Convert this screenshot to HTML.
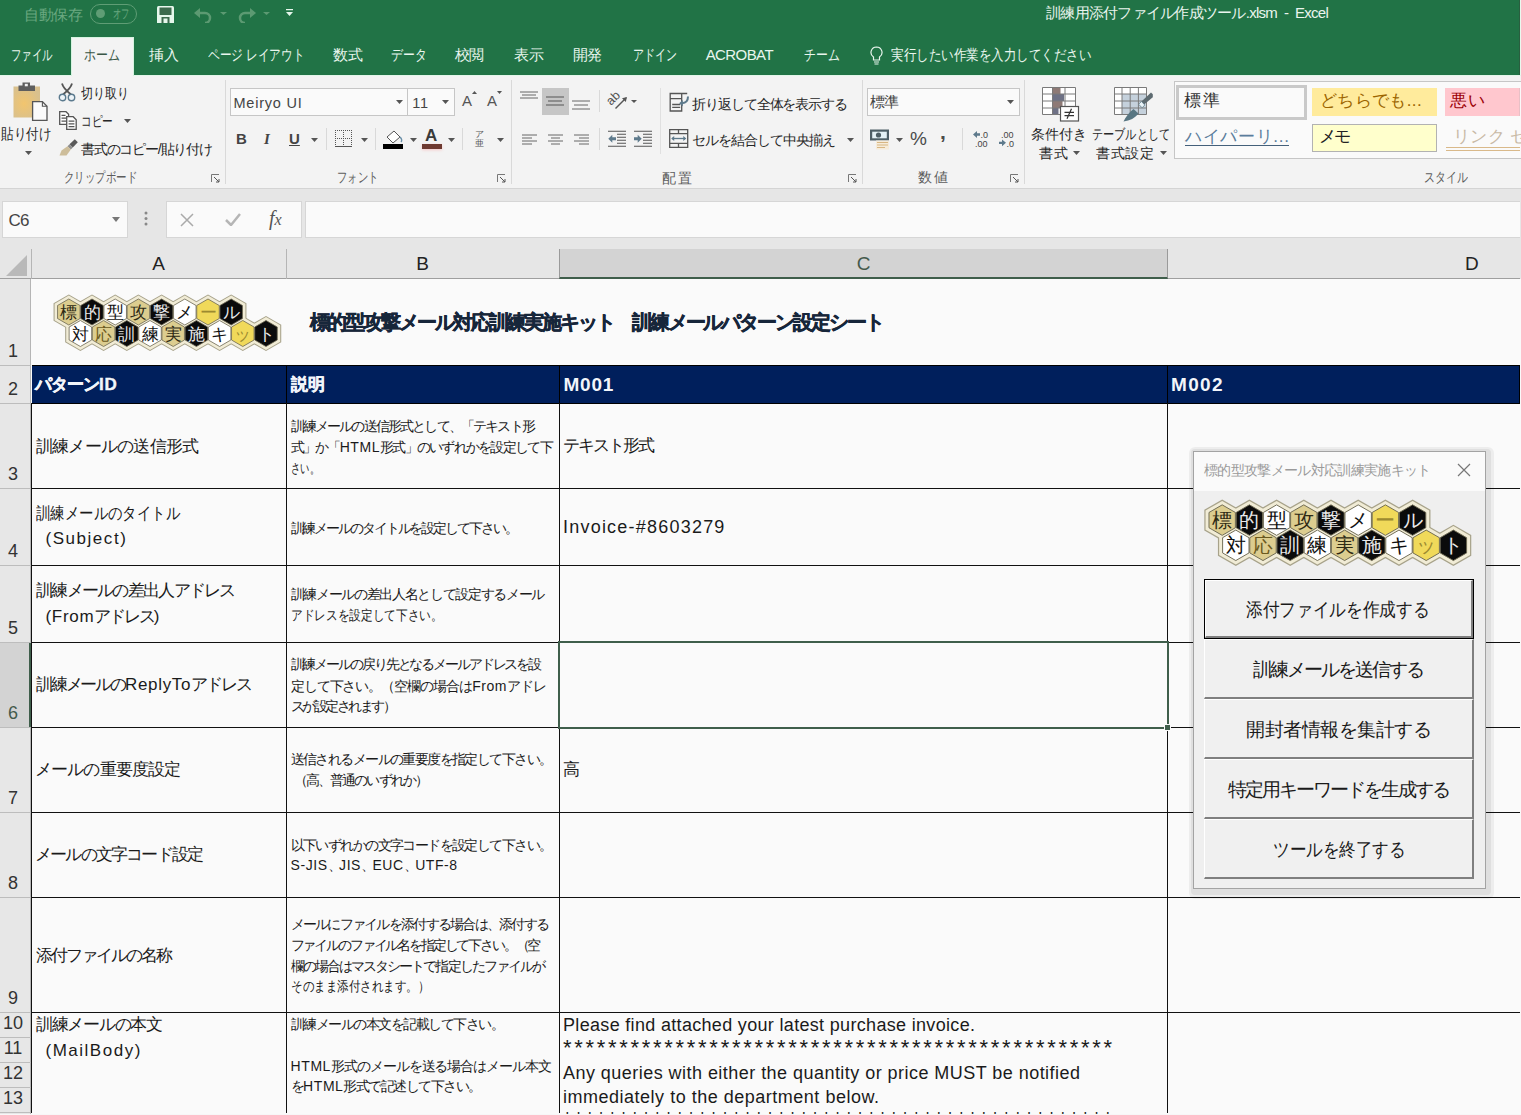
<!DOCTYPE html>
<html><head><meta charset="utf-8">
<style>
*{margin:0;padding:0;box-sizing:border-box}
html,body{width:1521px;height:1115px;overflow:hidden}
body{position:relative;background:#fafafa;font-family:"Liberation Sans",sans-serif;color:#222;font-feature-settings:"palt"}
.a{position:absolute;white-space:nowrap}
/* top */
#green{left:0;top:0;width:1520px;height:75px;background:#217346;border-right:1px solid #2a5e3f}
#edge{left:1520px;top:0;width:1px;height:75px;background:#e9fbf0}
.tab{top:45px;font-size:15px;color:#e9f6ee;line-height:20px}
#ribbon{left:0;top:75px;width:1521px;height:114px;background:#f3f3f3;border-bottom:1px solid #d4d4d4}
#hometab{left:71px;top:37px;width:63px;height:40px;background:#f3f3f3;border:1px solid #d6f3e0;border-bottom:none}
#fband{left:0;top:189px;width:1521px;height:90px;background:#e6e6e6}
.rt{font-size:14px;color:#262626;line-height:18px}
.glabel{font-size:13.5px;color:#5c5c5c;line-height:16px;top:169px}
.vsep{top:80px;width:1px;height:104px;background:#d9d9d9}
/* grid */
.hl{position:absolute;height:1px;background:#111}
.vl{position:absolute;width:1px;background:#111}
.rh{position:absolute;left:0;width:26px;font-size:18px;color:#222;text-align:center;line-height:20px}
.cellA{font-size:16px;color:#111;line-height:25px}
.cellB{font-size:13.3px;color:#111;line-height:21px}
.ti{font-size:20px;font-weight:bold;color:#17263a;line-height:24px;-webkit-text-stroke:0.5px #17263a}
.hd{font-size:17px;font-weight:bold;color:#f2f5fa;line-height:20px;-webkit-text-stroke:0.4px #f2f5fa}
.ca{font-size:17px;color:#1a1a1a;line-height:22px}
.cb{font-size:14px;color:#1a1a1a;line-height:18px}
.cc{font-size:18px;color:#1a1a1a;line-height:22px}
.as{font-size:22px;color:#1a1a1a;line-height:22px}
.cj{font-size:17px;color:#1a1a1a;line-height:22px}
.hm{font-size:19px;font-weight:bold;color:#f2f5fa;line-height:22px}
.bt{font-size:19px;color:#1a1a1a;line-height:22px;text-align:center}
</style></head><body>

<!-- ===== Title bar & tabs ===== -->
<div class="a" id="green"></div>
<div class="a" id="edge"></div>
<div class="a" id="hometab"></div>
<div class="a" id="f_qat" style="left:24.2px;top:5.5px;font-size:15px;color:#6aa880;line-height:18px;letter-spacing:-0.533px">自動保存</div>
<div class="a" style="left:90px;top:4px;width:47px;height:20px;border:1px solid #5f9d75;border-radius:10px"></div>
<div class="a" style="left:96px;top:9px;width:9px;height:9px;border-radius:50%;background:#5f9d75"></div>
<div class="a" id="f_off" style="left:113px;top:6px;font-size:13px;color:#6aa880;line-height:16px;transform:scaleX(0.64);transform-origin:0 0">オフ</div>
<svg class="a" style="left:157px;top:6px" width="17" height="17" viewBox="0 0 17 17"><path d="M0 1.5Q0 0 1.5 0h14Q17 0 17 1.5V17H0z" fill="#e6f7ec"/><rect x="2.5" y="1.5" width="12" height="7.5" fill="#3c6a4d"/><rect x="4.5" y="11" width="8" height="6" fill="#3c6a4d"/><rect x="6.5" y="12.5" width="4" height="4.5" fill="#e6f7ec"/></svg>
<svg class="a" style="left:194px;top:7px" width="34" height="16" viewBox="0 0 34 16"><path d="M3 6h8a5 5 0 0 1 0 10" fill="none" stroke="#5c9a72" stroke-width="2.5"/><path d="M0 6l6-5v10z" fill="#5c9a72"/><path d="M26 5h7l-3.5 3z" fill="#5c9a72"/></svg>
<svg class="a" style="left:236px;top:7px" width="34" height="16" viewBox="0 0 34 16"><path d="M17 6H9a5 5 0 0 0 0 10" fill="none" stroke="#5c9a72" stroke-width="2.5"/><path d="M20 6l-6-5v10z" fill="#5c9a72"/><path d="M27 5h7l-3.5 3z" fill="#5c9a72"/></svg>
<svg class="a" style="left:286px;top:9px" width="7" height="8" viewBox="0 0 7 8"><path d="M0 .5h7" stroke="#e6f7ec" stroke-width="1.5"/><path d="M0 3h7L3.5 7z" fill="#e6f7ec"/></svg>

<div class="a tab" id="f_t0" style="left:11.4px;top:45.3px;transform:scaleX(0.6950);transform-origin:0 50%">ファイル</div>
<div class="a tab" id="f_t1" style="color:#3a5646;left:84.2px;top:45.3px;transform:scaleX(0.7956);transform-origin:0 50%">ホーム</div>
<div class="a tab" id="f_t2" style="left:149px;top:45.3px;letter-spacing:-0.300px">挿入</div>
<div class="a tab" id="f_t3" style="left:207.6px;top:45.3px;transform:scaleX(0.7763);transform-origin:0 50%">ページ レイアウト</div>
<div class="a tab" id="f_t4" style="left:332.5px;top:45.3px;letter-spacing:0.200px">数式</div>
<div class="a tab" id="f_t5" style="left:391px;top:45.3px;transform:scaleX(0.7911);transform-origin:0 50%">データ</div>
<div class="a tab" id="f_t6" style="left:454.8px;top:45.3px;letter-spacing:-1.100px">校閲</div>
<div class="a tab" id="f_t7" style="left:514px;top:45.3px;letter-spacing:-0.400px">表示</div>
<div class="a tab" id="f_t8" style="left:573.4px;top:45.3px;letter-spacing:-1.400px">開発</div>
<div class="a tab" id="f_t9" style="left:632.5px;top:45.3px;transform:scaleX(0.7300);transform-origin:0 50%">アドイン</div>
<div class="a tab" id="f_t10" style="left:705.7px;top:45.3px;letter-spacing:-0.584px">ACROBAT</div>
<div class="a tab" id="f_t11" style="left:804px;top:45.3px;transform:scaleX(0.7911);transform-origin:0 50%">チーム</div>
<svg class="a" style="left:870px;top:46px" width="13" height="19" viewBox="0 0 13 19"><path d="M6.5 1a5.5 5.5 0 0 0-3 10.1V14h6v-2.9A5.5 5.5 0 0 0 6.5 1z" fill="none" stroke="#e9f6ee" stroke-width="1.2"/><path d="M4 16h5M4.5 18h4" stroke="#e9f6ee" stroke-width="1.2"/></svg>
<div class="a tab" id="f_t12" style="left:890.6px;top:45.3px;transform:scaleX(0.8342);transform-origin:0 50%">実行したい作業を入力してください</div>
<div class="a" id="f_title" style="font-size:15px;color:#eaf5ee;line-height:18px;left:1046px;top:4.0px;letter-spacing:-0.734px">訓練用添付ファイル作成ツール.xlsm&nbsp;&nbsp;-&nbsp;&nbsp;Excel</div>

<!-- ===== Ribbon ===== -->
<div class="a" id="ribbon"></div>
<div class="a" style="left:0;top:75px;width:71px;height:1px;background:#e3f6ea"></div><div class="a" style="left:134px;top:75px;width:1387px;height:1px;background:#e3f6ea"></div><div class="a" style="left:71px;top:75px;width:63px;height:1px;background:#f3f3f3;border-left:1px solid #d6f3e0;border-right:1px solid #d6f3e0"></div>
<!-- clipboard group -->
<svg class="a" style="left:10px;top:82px" width="40" height="40" viewBox="0 0 40 40">
 <defs><radialGradient id="pg" cx="0.4" cy="0.55" r="0.6"><stop offset="0" stop-color="#f2c56e"/><stop offset="1" stop-color="#d8c08e"/></radialGradient></defs>
 <rect x="3.5" y="4.5" width="26.5" height="31" fill="url(#pg)"/>
 <rect x="8.5" y="3.5" width="16.5" height="5.5" fill="#5e5e5e"/>
 <rect x="12.5" y="0.5" width="7.5" height="4" fill="#5e5e5e"/>
 <rect x="14.8" y="1.8" width="3" height="2.5" fill="#f3f3f3"/>
 <path d="M22.6 19.6h9.8l4.6 4.6v14.2H22.6z" fill="#fafafa" stroke="#555" stroke-width="1.3"/>
 <path d="M32.4 19.6v4.6H37" fill="none" stroke="#555" stroke-width="1.1"/>
</svg>
<div class="a rt" id="f_r0" style="font-size:15px;left:1.2px;top:125.0px;transform:scaleX(0.8367);transform-origin:0 50%">貼り付け</div>
<svg class="a" style="left:25px;top:151px" width="7" height="4"><path d="M0 0h7L3.5 4z" fill="#555"/></svg>
<svg class="a" style="left:58px;top:82px" width="18" height="20" viewBox="0 0 18 20"><path d="M4 1.5c1 4 4 7 9 11M14 1.5c-1 4-4 7-9 11" stroke="#555" stroke-width="1.8" fill="none"/><circle cx="4.5" cy="15.5" r="3.2" fill="#eef4f8" stroke="#5b7a8e" stroke-width="1.4"/><circle cx="13.5" cy="15.5" r="3.2" fill="#eef4f8" stroke="#5b7a8e" stroke-width="1.4"/></svg>
<div class="a rt" id="f_r1" style="left:81px;top:84.0px;transform:scaleX(0.8571);transform-origin:0 50%">切り取り</div>
<svg class="a" style="left:59px;top:111px" width="18" height="19" viewBox="0 0 18 19"><path d="M.7 .7h6.3l2.6 2.6V13.3H.7z" fill="#fff" stroke="#555" stroke-width="1.3"/><path d="M2.5 4.3h4M2.5 7.2h5M2.5 10.1h5" stroke="#555" stroke-width="1.2"/><path d="M7.7 5.7h6.5l3 3v9.6H7.7z" fill="#fff" stroke="#555" stroke-width="1.3"/><path d="M9.6 10.2h5.8M9.6 12.9h5.8M9.6 15.6h5.8" stroke="#555" stroke-width="1.2"/></svg>
<div class="a rt" id="f_r2" style="left:81px;top:112.0px;transform:scaleX(0.7619);transform-origin:0 50%">コピー</div>
<svg class="a" style="left:124px;top:119px" width="7" height="4"><path d="M0 0h7L3.5 4z" fill="#555"/></svg>
<svg class="a" style="left:59px;top:139px" width="19" height="17" viewBox="0 0 19 17"><path d="M10.5 5.2l5.3-5 3 3-5 5.3z" fill="#595959"/><path d="M8.5 7.2l2-2 3.3 3.3-2 2z" fill="#8d8d8d"/><path d="M0.5 16.5l2-5 6-4.3 3.3 3.3-4.3 6z" fill="#cdbd9a"/></svg>
<div class="a rt" id="f_r3" style="left:81px;top:140.0px;letter-spacing:-1.189px">書式のコピー/貼り付け</div>
<div class="a glabel" id="f_g0" style="left:63.5px;top:169.8px;transform:scaleX(0.7490);transform-origin:0 50%">クリップボード</div>
<svg class="a" style="left:211px;top:174px" width="9" height="9"><path d="M.5 8V.5H8" fill="none" stroke="#777"/><path d="M3 3l5 5M5 8h3V5" fill="none" stroke="#555"/></svg>
<div class="a vsep" style="left:225px"></div>

<!-- font group -->
<div class="a" style="left:230px;top:88px;width:178px;height:28px;background:#fafafa;border:1px solid #c6c6c6"></div>
<div class="a" style="left:407px;top:88px;width:48px;height:28px;background:#fafafa;border:1px solid #c6c6c6"></div>
<div class="a rt" id="f_r4" style="font-size:14.5px;color:#444;left:233.4px;top:93.6px;letter-spacing:0.807px">Meiryo UI</div>
<svg class="a" style="left:396px;top:100px" width="7" height="4"><path d="M0 0h7L3.5 4z" fill="#555"/></svg>
<div class="a rt" id="f_r5" style="font-size:14.5px;color:#444;left:412.3px;top:93.6px;letter-spacing:0.637px">11</div>
<svg class="a" style="left:442px;top:100px" width="7" height="4"><path d="M0 0h7L3.5 4z" fill="#555"/></svg>
<div class="a" style="left:462px;top:92px;font-size:15px;color:#555;line-height:18px">A</div>
<svg class="a" style="left:472px;top:91px" width="5" height="3"><path d="M0 3h5L2.5 0z" fill="#555"/></svg>
<div class="a" style="left:487px;top:92px;font-size:15px;color:#555;line-height:18px">A</div>
<svg class="a" style="left:497px;top:91px" width="5" height="3"><path d="M0 0h5L2.5 3z" fill="#555"/></svg>
<div class="a" style="left:236px;top:130px;font-size:15px;font-weight:bold;color:#444;line-height:18px">B</div>
<div class="a" style="left:264px;top:130px;font-size:15px;font-weight:bold;font-style:italic;color:#444;line-height:18px;font-family:'Liberation Serif',serif">I</div>
<div class="a" style="left:289px;top:130px;font-size:15px;font-weight:bold;color:#444;line-height:18px;text-decoration:underline">U</div>
<svg class="a" style="left:311px;top:138px" width="7" height="4"><path d="M0 0h7L3.5 4z" fill="#555"/></svg>
<div class="a" style="left:326px;top:128px;width:1px;height:22px;background:#d9d9d9"></div>
<svg class="a" style="left:335px;top:130px" width="18" height="18" viewBox="0 0 18 18" shape-rendering="crispEdges"><path d="M0.5 0v16M8.5 0v16M16.5 0v16M0 0.5h17M0 8.5h17" stroke="#555" stroke-width="1" stroke-dasharray="1 1" fill="none"/><path d="M0 16.5h17" stroke="#555" stroke-width="1"/></svg>
<svg class="a" style="left:361px;top:138px" width="7" height="4"><path d="M0 0h7L3.5 4z" fill="#555"/></svg>
<div class="a" style="left:375px;top:128px;width:1px;height:22px;background:#d9d9d9"></div>
<svg class="a" style="left:383px;top:128px" width="22" height="22" viewBox="0 0 22 22"><path d="M4 9l7-6 6 6-7 6z" fill="#fff" stroke="#555"/><path d="M17 9c2 2 2 4 1 5" stroke="#6a8fa8" stroke-width="1.5" fill="none"/><rect x="0" y="16" width="20" height="5" fill="#000"/></svg>
<svg class="a" style="left:410px;top:138px" width="7" height="4"><path d="M0 0h7L3.5 4z" fill="#555"/></svg>
<div class="a" style="left:425px;top:126px;font-size:17px;font-weight:bold;color:#3a3a3a;line-height:20px">A</div>
<div class="a" style="left:422px;top:144px;width:20px;height:5px;background:#6e3a31;box-shadow:0 1px 3px rgba(255,120,120,.35)"></div>
<svg class="a" style="left:448px;top:138px" width="7" height="4"><path d="M0 0h7L3.5 4z" fill="#555"/></svg>
<div class="a" style="left:462px;top:128px;width:1px;height:22px;background:#d9d9d9"></div>
<div class="a" style="left:475px;top:130px;font-size:9px;color:#555;line-height:9px">ア<br>亜</div>
<svg class="a" style="left:497px;top:138px" width="7" height="4"><path d="M0 0h7L3.5 4z" fill="#555"/></svg>
<div class="a glabel" id="f_g1" style="left:337.4px;top:169.6px;transform:scaleX(0.7393);transform-origin:0 50%">フォント</div>
<svg class="a" style="left:497px;top:174px" width="9" height="9"><path d="M.5 8V.5H8" fill="none" stroke="#777"/><path d="M3 3l5 5M5 8h3V5" fill="none" stroke="#555"/></svg>
<div class="a vsep" style="left:511px"></div>

<!-- alignment group -->
<svg class="a" style="left:519px;top:91px" width="20" height="8"><path d="M1 1h18M3 4h14M1 7h18" stroke="#666"/></svg>
<div class="a" style="left:542px;top:88px;width:27px;height:27px;background:#c6c6c6"></div>
<svg class="a" style="left:545px;top:96px" width="20" height="11"><path d="M1 1h18M3 5h14M1 9h18" stroke="#555"/></svg>
<svg class="a" style="left:571px;top:100px" width="20" height="11"><path d="M1 1h18M3 5h14M1 9h18" stroke="#666"/></svg>
<div class="a" style="left:599px;top:90px;width:1px;height:22px;background:#d9d9d9"></div>
<svg class="a" style="left:606px;top:90px" width="34" height="22" viewBox="0 0 34 22"><text x="1.5" y="14.5" font-size="12.5" fill="#555" transform="rotate(-45 5 11)" font-family="Liberation Sans">ab</text><path d="M9.5 18.5l10.5-10.5" stroke="#555" stroke-width="1.4"/><path d="M21 7l-5 1.2 3.8 3.8z" fill="#555"/><path d="M25 10h6l-3 3z" fill="#555"/></svg>
<div class="a" style="left:660px;top:88px;width:1px;height:66px;background:#e0e0e0"></div>
<svg class="a" style="left:669px;top:92px" width="21" height="20" viewBox="0 0 21 20"><path d="M1.2 1.5h11.5v17.5H1.2zM1.2 6.6h11.5M12.7 1.5h5.5M3.2 12.5h8M3.2 15.4h8" fill="none" stroke="#555" stroke-width="1.3"/><path d="M19 4.5c0 4-2 6.5-6 6.8" fill="none" stroke="#5e7a8c" stroke-width="2"/><path d="M10.2 11.3l3.6-3.2v6.4z" fill="#5e7a8c"/></svg>
<div class="a rt" id="f_r6" style="left:692px;top:95.0px;letter-spacing:-1.073px">折り返して全体を表示する</div>
<svg class="a" style="left:521px;top:134px" width="17" height="12"><path d="M1 1h15M1 4h10M1 7h15M1 10h10" stroke="#666"/></svg>
<svg class="a" style="left:547px;top:134px" width="17" height="12"><path d="M1 1h15M4 4h9M1 7h15M4 10h9" stroke="#666"/></svg>
<svg class="a" style="left:573px;top:134px" width="17" height="12"><path d="M1 1h15M6 4h10M1 7h15M6 10h10" stroke="#666"/></svg>
<div class="a" style="left:599px;top:128px;width:1px;height:22px;background:#d9d9d9"></div>
<svg class="a" style="left:608px;top:130px" width="19" height="18" viewBox="0 0 19 18"><path d="M0 1.3h18M9 4.3h9M9 7.3h9M9 10.3h9M9 13.3h9M0 16.3h18" stroke="#555" stroke-width="1.1"/><path d="M0.3 8.8l4-4v2.5h3.7v3h-3.7v2.5z" fill="#5e7a8c"/></svg>
<svg class="a" style="left:634px;top:130px" width="19" height="18" viewBox="0 0 19 18"><path d="M0 1.3h18M9 4.3h9M9 7.3h9M9 10.3h9M9 13.3h9M0 16.3h18" stroke="#555" stroke-width="1.1"/><path d="M7.7 8.8l-4-4v2.5H0v3h3.7v2.5z" fill="#5e7a8c"/></svg>
<svg class="a" style="left:669px;top:129px" width="20" height="19" viewBox="0 0 20 19"><path d="M.7 .7h18v17.6H.7zM.7 4.6h18M.7 14.4h18M9.5 .7v3.9M9.5 14.4v3.9" fill="none" stroke="#555" stroke-width="1.3"/><path d="M3.5 9.5h12.5" stroke="#5e7a8c" stroke-width="1.3"/><path d="M2.2 9.5l3-2.6v5.2zM17.3 9.5l-3-2.6v5.2z" fill="#5e7a8c"/></svg>
<div class="a rt" id="f_r7" style="left:692px;top:131.0px;letter-spacing:-0.960px">セルを結合して中央揃え</div>
<svg class="a" style="left:847px;top:138px" width="7" height="4"><path d="M0 0h7L3.5 4z" fill="#555"/></svg>
<div class="a glabel" id="f_g2" style="left:662.4px;top:170.6px;letter-spacing:1.600px">配置</div>
<svg class="a" style="left:848px;top:174px" width="9" height="9"><path d="M.5 8V.5H8" fill="none" stroke="#777"/><path d="M3 3l5 5M5 8h3V5" fill="none" stroke="#555"/></svg>
<div class="a vsep" style="left:862px"></div>

<!-- number group -->
<div class="a" style="left:867px;top:88px;width:153px;height:28px;background:#fafafa;border:1px solid #c6c6c6"></div>
<div class="a rt" id="f_r8" style="font-size:14.5px;color:#444;left:870.2px;top:93.3px;letter-spacing:-0.700px">標準</div>
<svg class="a" style="left:1007px;top:100px" width="7" height="4"><path d="M0 0h7L3.5 4z" fill="#555"/></svg>
<svg class="a" style="left:870px;top:129px" width="20" height="21" viewBox="0 0 20 21"><rect x="0" y="0.5" width="19" height="11" fill="#4d5f66"/><rect x="2.2" y="2.7" width="14.6" height="6.6" fill="#e3f1f5"/><circle cx="8.5" cy="6" r="2.6" fill="#4d5f66"/><rect x="6" y="11.5" width="13" height="9" fill="#f6ecda"/><path d="M7 13.5h11M7 16h11M7 18.5h8" stroke="#d8b784" stroke-width="1.1"/></svg>
<svg class="a" style="left:896px;top:138px" width="7" height="4"><path d="M0 0h7L3.5 4z" fill="#555"/></svg>
<div class="a" style="left:910px;top:129px;font-size:19px;color:#4a4a4a;line-height:20px">%</div>
<div class="a" style="left:940px;top:122px;font-size:21px;font-weight:bold;color:#4a4a4a;line-height:20px">,</div>
<div class="a" style="left:962px;top:128px;width:1px;height:22px;background:#d9d9d9"></div>
<svg class="a" style="left:972px;top:130px" width="18" height="18" viewBox="0 0 18 18"><path d="M1 4.5l4-3.5v2.3h3v2.4H5V8z" fill="#5e7a8c"/><text x="8.5" y="7.5" font-size="9" fill="#444" font-family="Liberation Sans">.0</text><text x="3" y="16.5" font-size="9" fill="#444" font-family="Liberation Sans">.00</text></svg>
<svg class="a" style="left:998px;top:130px" width="18" height="18" viewBox="0 0 18 18"><text x="3" y="7.5" font-size="9" fill="#444" font-family="Liberation Sans">.00</text><path d="M8 12.8l-4-3.3v2.2H1v2.3h3v2.2z" fill="#5e7a8c"/><text x="8.5" y="16.5" font-size="9" fill="#444" font-family="Liberation Sans">.0</text></svg>
<div class="a glabel" id="f_g3" style="left:918px;top:169.8px;letter-spacing:2.300px">数値</div>
<svg class="a" style="left:1010px;top:174px" width="9" height="9"><path d="M.5 8V.5H8" fill="none" stroke="#777"/><path d="M3 3l5 5M5 8h3V5" fill="none" stroke="#555"/></svg>
<div class="a vsep" style="left:1024px"></div>

<!-- styles -->
<svg class="a" style="left:1042px;top:87px" width="38" height="35" viewBox="0 0 38 35"><rect x="0.5" y="0.5" width="33" height="27" fill="#fff"/><rect x="10.5" y="0.5" width="8" height="6.5" fill="#8e7a76"/><rect x="10.5" y="7" width="11.5" height="7" fill="#6e7185"/><rect x="10.5" y="14" width="10" height="7" fill="#8e7a76"/><rect x="10.5" y="21" width="6" height="6.5" fill="#6e7185"/><path d="M.5 .5h33v27H.5zM.5 7h33M.5 14h33M.5 21h33M10.5 .5v27M23 .5v27" fill="none" stroke="#7a7a7a" stroke-width="1"/><rect x="18.5" y="19.5" width="18" height="14.5" fill="#fff" stroke="#555" stroke-width="1.2"/><path d="M22.5 25.3h9.5M22.5 28.7h9.5M29.5 21.8l-4.5 10" stroke="#333" stroke-width="1.2" fill="none"/></svg>
<div class="a rt" id="f_r9" style="left:1031px;top:125.0px;letter-spacing:-0.100px">条件付き</div>
<div class="a rt" id="f_r10" style="left:1039px;top:143.9px;letter-spacing:1.000px">書式</div><svg class="a" style="left:1073px;top:151px" width="7" height="4"><path d="M0 0h7L3.5 4z" fill="#555"/></svg>
<svg class="a" style="left:1114px;top:87px" width="40" height="36" viewBox="0 0 40 36"><rect x="0.5" y="0.5" width="32" height="27" fill="#fff"/><rect x="8" y="7" width="24.5" height="20.5" fill="#c5d1dc"/><path d="M.5 .5h32v27H.5zM.5 7h32M.5 14h32M.5 21h32M8 .5v27M16.2 .5v27M24.4 .5v27" fill="none" stroke="#7a7a7a" stroke-width="1"/><path d="M27.5 14.5l9.5-9 1.8 1.8v3L29.5 18z" fill="#5d6a70"/><path d="M24.6 17.2l2.9-2.7 3.3 3.5-2.7 2.8z" fill="#eaf3f7" stroke="#5d7a88" stroke-width="0.8"/><path d="M9.5 34.5c2-4.5 5.5-9 10-12.5l5 4.6C21 31 16 34 9.5 34.5z" fill="#587682"/></svg>
<div class="a rt" id="f_r11" style="left:1091.5px;top:125.0px;transform:scaleX(0.7969);transform-origin:0 50%">テーブルとして</div>
<div class="a rt" id="f_r12" style="left:1096.3px;top:144.0px;letter-spacing:0.567px">書式設定</div><svg class="a" style="left:1160px;top:151px" width="7" height="4"><path d="M0 0h7L3.5 4z" fill="#555"/></svg>
<div class="a" style="left:1174px;top:81px;width:360px;height:78px;background:#fafafa;border:1px solid #c6c6c6"></div>
<div class="a" style="left:1176px;top:85px;width:131px;height:35px;background:#fafafa;border:3px solid #c9c9c9"></div>
<div class="a" id="f_s0" style="font-size:17px;color:#333;line-height:22px;left:1184.3px;top:90.0px;letter-spacing:1.300px">標準</div>
<div class="a" style="left:1312px;top:88px;width:125px;height:28px;background:#ffeb9c"></div>
<div class="a" id="f_s1" style="font-size:17px;color:#9c6500;line-height:22px;left:1320px;top:90.0px;letter-spacing:0.347px">どちらでも...</div>
<div class="a" style="left:1445px;top:88px;width:75px;height:28px;background:#ffc7ce;border-right:1px solid #e8c0c6"></div>
<div class="a" id="f_s2" style="font-size:17px;color:#9c0006;line-height:22px;left:1450.4px;top:90.0px;letter-spacing:0.600px">悪い</div>
<div class="a" id="f_s3" style="font-size:17px;color:#5b7d9c;line-height:22px;left:1185px;top:125.9px;letter-spacing:0.675px">ハイパーリ...</div><div class="a" style="left:1185px;top:145px;width:104px;height:1px;background:#44607a"></div>
<div class="a" style="left:1312px;top:124px;width:125px;height:28px;background:#ffffcc;border:1px solid #b2b2b2"></div>
<div class="a" id="f_s4" style="font-size:17px;color:#222;line-height:22px;left:1318.9px;top:126.0px;letter-spacing:-1.900px">メモ</div>
<div class="a" id="f_s5" style="font-size:17px;color:#c8b9a5;line-height:22px;left:1452.7px;top:126.0px;letter-spacing:0.513px">リンク セル</div><div class="a" style="left:1446px;top:147px;width:74px;height:4px;border-top:1px solid #d9b98a;border-bottom:1px solid #d9b98a"></div>
<div class="a glabel" id="f_g4" style="left:1423.9px;top:169.7px;transform:scaleX(0.7821);transform-origin:0 50%">スタイル</div>

<!-- ===== Formula band ===== -->
<div class="a" id="fband"></div>
<div class="a" style="left:2px;top:201px;width:126px;height:37px;background:#fafafa;border:1px solid #d6d6d6"></div>
<div class="a" id="f_c6" style="font-size:17px;color:#444;line-height:20px;left:8.4px;top:210.6px;letter-spacing:-0.634px">C6</div>
<svg class="a" style="left:112px;top:217px" width="8" height="5"><path d="M0 0h8L4 5z" fill="#777"/></svg>
<svg class="a" style="left:144px;top:211px" width="4" height="15"><circle cx="2" cy="2" r="1.5" fill="#888"/><circle cx="2" cy="7.5" r="1.5" fill="#888"/><circle cx="2" cy="13" r="1.5" fill="#888"/></svg>
<div class="a" style="left:166px;top:201px;width:136px;height:37px;background:#fafafa;border:1px solid #d6d6d6"></div>
<svg class="a" style="left:180px;top:213px" width="14" height="14"><path d="M1 1l12 12M13 1L1 13" stroke="#aaa" stroke-width="1.5"/></svg>
<svg class="a" style="left:225px;top:212px" width="16" height="14"><path d="M1 8l5 5L15 2" stroke="#b5b5b5" stroke-width="2.5" fill="none"/></svg>
<div class="a" style="left:269px;top:207px;font-size:20px;font-style:italic;color:#555;line-height:22px;font-family:'Liberation Serif',serif">f<span style="font-size:16px">x</span></div>
<div class="a" style="left:305px;top:201px;width:1215px;height:37px;background:#fafafa;border:1px solid #d6d6d6;border-right:none"></div>
<!-- column headers -->
<div class="a" style="left:0;top:278px;width:1520px;height:1px;background:#9f9f9f"></div>
<svg class="a" style="left:6px;top:255px" width="22" height="21"><path d="M21 0v21H0z" fill="#b9b9b9"/></svg>
<div class="a" style="left:31px;top:249px;width:1px;height:30px;background:#b5b5b5"></div>
<div class="a" style="left:286px;top:249px;width:1px;height:30px;background:#b5b5b5"></div>
<div class="a" style="left:559px;top:249px;width:609px;height:30px;background:#d3d3d3;border-left:1px solid #9a9a9a;border-right:1px solid #9a9a9a;border-bottom:2px solid #3f5e4b"></div>
<div class="a" style="left:0;top:253px;width:317px;font-size:19px;color:#222;line-height:22px;text-align:center">A</div>
<div class="a" style="left:286px;top:253px;width:273px;font-size:19px;color:#222;line-height:22px;text-align:center">B</div>
<div class="a" style="left:559px;top:253px;width:609px;font-size:19px;color:#445a4c;line-height:22px;text-align:center">C</div>
<div class="a" style="left:1465px;top:253px;font-size:19px;color:#222;line-height:22px">D</div>

<!-- ===== Grid ===== -->
<div class="a" style="left:0;top:279px;width:31px;height:836px;background:#e7e7e7;border-right:1px solid #b5b5b5"></div>
<div class="a" style="left:0;top:642px;width:31px;height:86px;background:#d3d3d3;border-right:2px solid #3f5e4b"></div>
<div class="a" style="left:0;top:365px;width:31px;height:1px;background:#bdbdbd"></div>
<div class="a rh" style="top:341px;color:#333">1</div>
<div class="a" style="left:0;top:403px;width:31px;height:1px;background:#bdbdbd"></div>
<div class="a rh" style="top:379px;color:#333">2</div>
<div class="a" style="left:0;top:488px;width:31px;height:1px;background:#bdbdbd"></div>
<div class="a rh" style="top:464px;color:#333">3</div>
<div class="a" style="left:0;top:565px;width:31px;height:1px;background:#bdbdbd"></div>
<div class="a rh" style="top:541px;color:#333">4</div>
<div class="a" style="left:0;top:642px;width:31px;height:1px;background:#bdbdbd"></div>
<div class="a rh" style="top:618px;color:#333">5</div>
<div class="a" style="left:0;top:727px;width:31px;height:1px;background:#bdbdbd"></div>
<div class="a rh" style="top:703px;color:#445a4c">6</div>
<div class="a" style="left:0;top:812px;width:31px;height:1px;background:#bdbdbd"></div>
<div class="a rh" style="top:788px;color:#333">7</div>
<div class="a" style="left:0;top:897px;width:31px;height:1px;background:#bdbdbd"></div>
<div class="a rh" style="top:873px;color:#333">8</div>
<div class="a" style="left:0;top:1012px;width:31px;height:1px;background:#bdbdbd"></div>
<div class="a rh" style="top:988px;color:#333">9</div>
<div class="a" style="left:0;top:1037px;width:31px;height:1px;background:#bdbdbd"></div>
<div class="a rh" style="top:1013px;color:#333">10</div>
<div class="a" style="left:0;top:1062px;width:31px;height:1px;background:#bdbdbd"></div>
<div class="a rh" style="top:1038px;color:#333">11</div>
<div class="a" style="left:0;top:1087px;width:31px;height:1px;background:#bdbdbd"></div>
<div class="a rh" style="top:1063px;color:#333">12</div>
<div class="a" style="left:0;top:1112px;width:31px;height:1px;background:#bdbdbd"></div>
<div class="a rh" style="top:1088px;color:#333">13</div>
<div class="a" style="left:0;top:1137px;width:31px;height:1px;background:#bdbdbd"></div>
<div class="a rh" style="top:1113px;color:#333">14</div>
<div class="a" style="left:32px;top:365px;width:1488px;height:39px;background:#001f5c;border-top:1px solid #000;border-bottom:1px solid #000"></div>
<div class="a" style="left:286px;top:365px;width:1px;height:39px;background:#000"></div>
<div class="a" style="left:559px;top:365px;width:1px;height:39px;background:#000"></div>
<div class="a" style="left:1167px;top:365px;width:1px;height:39px;background:#000"></div>
<div class="a" style="left:1519px;top:365px;width:1px;height:39px;background:#000"></div>
<div class="hl" style="left:32px;top:488px;width:1488px"></div>
<div class="hl" style="left:32px;top:565px;width:1488px"></div>
<div class="hl" style="left:32px;top:642px;width:1488px"></div>
<div class="hl" style="left:32px;top:727px;width:1488px"></div>
<div class="hl" style="left:32px;top:812px;width:1488px"></div>
<div class="hl" style="left:32px;top:897px;width:1488px"></div>
<div class="hl" style="left:32px;top:1012px;width:1488px"></div>
<div class="vl" style="left:31px;top:403px;height:710px"></div>
<div class="vl" style="left:286px;top:403px;height:710px"></div>
<div class="vl" style="left:559px;top:403px;height:710px"></div>
<div class="vl" style="left:1167px;top:403px;height:710px"></div>
<div class="a" style="left:558px;top:641px;width:611px;height:88px;border:2px solid #3f5e4b"></div>
<div class="a" style="left:1164px;top:724px;width:7px;height:7px;background:#3f5e4b;border:1px solid #fafafa"></div>

<!-- ===== Logos ===== -->
<svg width="0" height="0" style="position:absolute"><symbol id="logo" viewBox="0 0 232 58">
<g fill="#a7a28a"><polygon points="16.80,0.40 32.04,9.20 32.04,26.80 16.80,35.60 1.56,26.80 1.56,9.20"/><polygon points="40.00,0.40 55.24,9.20 55.24,26.80 40.00,35.60 24.76,26.80 24.76,9.20"/><polygon points="63.20,0.40 78.44,9.20 78.44,26.80 63.20,35.60 47.96,26.80 47.96,9.20"/><polygon points="86.40,0.40 101.64,9.20 101.64,26.80 86.40,35.60 71.16,26.80 71.16,9.20"/><polygon points="109.60,0.40 124.84,9.20 124.84,26.80 109.60,35.60 94.36,26.80 94.36,9.20"/><polygon points="132.80,0.40 148.04,9.20 148.04,26.80 132.80,35.60 117.56,26.80 117.56,9.20"/><polygon points="156.00,0.40 171.24,9.20 171.24,26.80 156.00,35.60 140.76,26.80 140.76,9.20"/><polygon points="179.20,0.40 194.44,9.20 194.44,26.80 179.20,35.60 163.96,26.80 163.96,9.20"/><polygon points="28.40,21.90 43.64,30.70 43.64,48.30 28.40,57.10 13.16,48.30 13.16,30.70"/><polygon points="51.60,21.90 66.84,30.70 66.84,48.30 51.60,57.10 36.36,48.30 36.36,30.70"/><polygon points="74.80,21.90 90.04,30.70 90.04,48.30 74.80,57.10 59.56,48.30 59.56,30.70"/><polygon points="98.00,21.90 113.24,30.70 113.24,48.30 98.00,57.10 82.76,48.30 82.76,30.70"/><polygon points="121.20,21.90 136.44,30.70 136.44,48.30 121.20,57.10 105.96,48.30 105.96,30.70"/><polygon points="144.40,21.90 159.64,30.70 159.64,48.30 144.40,57.10 129.16,48.30 129.16,30.70"/><polygon points="167.60,21.90 182.84,30.70 182.84,48.30 167.60,57.10 152.36,48.30 152.36,30.70"/><polygon points="190.80,21.90 206.04,30.70 206.04,48.30 190.80,57.10 175.56,48.30 175.56,30.70"/><polygon points="214.00,21.90 229.24,30.70 229.24,48.30 214.00,57.10 198.76,48.30 198.76,30.70"/></g>
<g fill="#f1ecd6"><polygon points="16.80,1.60 31.00,9.80 31.00,26.20 16.80,34.40 2.60,26.20 2.60,9.80"/><polygon points="40.00,1.60 54.20,9.80 54.20,26.20 40.00,34.40 25.80,26.20 25.80,9.80"/><polygon points="63.20,1.60 77.40,9.80 77.40,26.20 63.20,34.40 49.00,26.20 49.00,9.80"/><polygon points="86.40,1.60 100.60,9.80 100.60,26.20 86.40,34.40 72.20,26.20 72.20,9.80"/><polygon points="109.60,1.60 123.80,9.80 123.80,26.20 109.60,34.40 95.40,26.20 95.40,9.80"/><polygon points="132.80,1.60 147.00,9.80 147.00,26.20 132.80,34.40 118.60,26.20 118.60,9.80"/><polygon points="156.00,1.60 170.20,9.80 170.20,26.20 156.00,34.40 141.80,26.20 141.80,9.80"/><polygon points="179.20,1.60 193.40,9.80 193.40,26.20 179.20,34.40 165.00,26.20 165.00,9.80"/><polygon points="28.40,23.10 42.60,31.30 42.60,47.70 28.40,55.90 14.20,47.70 14.20,31.30"/><polygon points="51.60,23.10 65.80,31.30 65.80,47.70 51.60,55.90 37.40,47.70 37.40,31.30"/><polygon points="74.80,23.10 89.00,31.30 89.00,47.70 74.80,55.90 60.60,47.70 60.60,31.30"/><polygon points="98.00,23.10 112.20,31.30 112.20,47.70 98.00,55.90 83.80,47.70 83.80,31.30"/><polygon points="121.20,23.10 135.40,31.30 135.40,47.70 121.20,55.90 107.00,47.70 107.00,31.30"/><polygon points="144.40,23.10 158.60,31.30 158.60,47.70 144.40,55.90 130.20,47.70 130.20,31.30"/><polygon points="167.60,23.10 181.80,31.30 181.80,47.70 167.60,55.90 153.40,47.70 153.40,31.30"/><polygon points="190.80,23.10 205.00,31.30 205.00,47.70 190.80,55.90 176.60,47.70 176.60,31.30"/><polygon points="214.00,23.10 228.20,31.30 228.20,47.70 214.00,55.90 199.80,47.70 199.80,31.30"/></g>
<g stroke="#6b6650" stroke-width="0.8"><polygon points="16.80,5.00 28.06,11.50 28.06,24.50 16.80,31.00 5.54,24.50 5.54,11.50" fill="#dccd8f"/><polygon points="40.00,5.00 51.26,11.50 51.26,24.50 40.00,31.00 28.74,24.50 28.74,11.50" fill="#0b0b0b"/><polygon points="63.20,5.00 74.46,11.50 74.46,24.50 63.20,31.00 51.94,24.50 51.94,11.50" fill="#ffffff"/><polygon points="86.40,5.00 97.66,11.50 97.66,24.50 86.40,31.00 75.14,24.50 75.14,11.50" fill="#dccd8f"/><polygon points="109.60,5.00 120.86,11.50 120.86,24.50 109.60,31.00 98.34,24.50 98.34,11.50" fill="#0b0b0b"/><polygon points="132.80,5.00 144.06,11.50 144.06,24.50 132.80,31.00 121.54,24.50 121.54,11.50" fill="#ffffff"/><polygon points="156.00,5.00 167.26,11.50 167.26,24.50 156.00,31.00 144.74,24.50 144.74,11.50" fill="#f0d95a"/><polygon points="179.20,5.00 190.46,11.50 190.46,24.50 179.20,31.00 167.94,24.50 167.94,11.50" fill="#0b0b0b"/><polygon points="28.40,26.50 39.66,33.00 39.66,46.00 28.40,52.50 17.14,46.00 17.14,33.00" fill="#ffffff"/><polygon points="51.60,26.50 62.86,33.00 62.86,46.00 51.60,52.50 40.34,46.00 40.34,33.00" fill="#dccd8f"/><polygon points="74.80,26.50 86.06,33.00 86.06,46.00 74.80,52.50 63.54,46.00 63.54,33.00" fill="#0b0b0b"/><polygon points="98.00,26.50 109.26,33.00 109.26,46.00 98.00,52.50 86.74,46.00 86.74,33.00" fill="#ffffff"/><polygon points="121.20,26.50 132.46,33.00 132.46,46.00 121.20,52.50 109.94,46.00 109.94,33.00" fill="#dccd8f"/><polygon points="144.40,26.50 155.66,33.00 155.66,46.00 144.40,52.50 133.14,46.00 133.14,33.00" fill="#0b0b0b"/><polygon points="167.60,26.50 178.86,33.00 178.86,46.00 167.60,52.50 156.34,46.00 156.34,33.00" fill="#ffffff"/><polygon points="190.80,26.50 202.06,33.00 202.06,46.00 190.80,52.50 179.54,46.00 179.54,33.00" fill="#f0d95a"/><polygon points="214.00,26.50 225.26,33.00 225.26,46.00 214.00,52.50 202.74,46.00 202.74,33.00" fill="#0b0b0b"/></g>
<g font-size="17" text-anchor="middle" font-family="Liberation Sans"><text x="16.8" y="24.0" fill="#2e2a14">標</text><text x="40.0" y="24.0" fill="#e9e9e9">的</text><text x="63.2" y="24.0" fill="#111">型</text><text x="86.4" y="24.0" fill="#2e2a14">攻</text><text x="109.6" y="24.0" fill="#e9e9e9">撃</text><text x="132.8" y="24.0" fill="#111">メ</text><text x="156.0" y="24.0" fill="#9c8a30">ー</text><text x="179.2" y="24.0" fill="#e9e9e9">ル</text><text x="28.4" y="45.5" fill="#111">対</text><text x="51.6" y="45.5" fill="#6b5a1e">応</text><text x="74.8" y="45.5" fill="#e9e9e9">訓</text><text x="98.0" y="45.5" fill="#111">練</text><text x="121.2" y="45.5" fill="#2e2a14">実</text><text x="144.4" y="45.5" fill="#e9e9e9">施</text><text x="167.6" y="45.5" fill="#111">キ</text><text x="190.8" y="45.5" fill="#9c8a30">ッ</text><text x="214.0" y="45.5" fill="#e9e9e9">ト</text></g>
</symbol></svg>
<svg class="a" style="left:52px;top:294px" width="232" height="58"><use href="#logo"/></svg>
<!-- ===== Dialog ===== -->
<div class="a" style="left:1189px;top:447px;width:305px;height:452px;background:rgba(0,0,0,0.05);border-radius:6px"></div>
<div class="a" style="left:1191px;top:449px;width:300px;height:446px;background:rgba(0,0,0,0.06);border-radius:4px"></div>
<div class="a" style="left:1193px;top:451px;width:293px;height:438px;background:#efefef;border:1px solid #a3a3a3"></div>
<div class="a" style="left:1194px;top:452px;width:291px;height:39px;background:#fafafa"></div>
<div class="a" id="f_dt" style="font-size:13.5px;color:#9a9a9a;line-height:18px;left:1204px;top:461.8px;letter-spacing:-0.675px">標的型攻撃メール対応訓練実施キット</div>
<svg class="a" style="left:1457px;top:463px" width="14" height="14"><path d="M1 1l12 12M13 1L1 13" stroke="#777" stroke-width="1.2"/></svg>
<svg class="a" style="left:1202px;top:499px" width="273" height="68" viewBox="0 0 232 58"><use href="#logo"/></svg>
<div class="a" style="left:1204px;top:579px;width:270px;height:60px;border:1px solid #000;background:#f0f0f0"><div style="position:absolute;left:0;top:0;right:0;bottom:0;border-top:1px solid #fff;border-left:1px solid #fff;border-right:2px solid #7f7f7f;border-bottom:2px solid #7f7f7f"></div></div>
<div class="a bt" id="f_b0" style="left:1246.4px;top:599.4px;transform:scaleX(0.8775);transform-origin:0 50%">添付ファイルを作成する</div>
<div class="a" style="left:1204px;top:639px;width:270px;height:60px;background:#f0f0f0;border-top:1px solid #fff;border-left:1px solid #fff;border-right:2px solid #7f7f7f;border-bottom:2px solid #7f7f7f"></div>
<div class="a bt" id="f_b1" style="left:1252.7px;top:659.3px;letter-spacing:-2.000px">訓練メールを送信する</div>
<div class="a" style="left:1204px;top:699px;width:270px;height:60px;background:#f0f0f0;border-top:1px solid #fff;border-left:1px solid #fff;border-right:2px solid #7f7f7f;border-bottom:2px solid #7f7f7f"></div>
<div class="a bt" id="f_b2" style="left:1246.4px;top:719.2px;letter-spacing:-0.500px">開封者情報を集計する</div>
<div class="a" style="left:1204px;top:759px;width:270px;height:60px;background:#f0f0f0;border-top:1px solid #fff;border-left:1px solid #fff;border-right:2px solid #7f7f7f;border-bottom:2px solid #7f7f7f"></div>
<div class="a bt" id="f_b3" style="left:1227.5px;top:779.0px;letter-spacing:-1.967px">特定用キーワードを生成する</div>
<div class="a" style="left:1204px;top:819px;width:270px;height:60px;background:#f0f0f0;border-top:1px solid #fff;border-left:1px solid #fff;border-right:2px solid #7f7f7f;border-bottom:2px solid #7f7f7f"></div>
<div class="a bt" id="f_b4" style="left:1273px;top:838.5px;transform:scaleX(0.8711);transform-origin:0 50%">ツールを終了する</div>
<!-- ===== Sheet text ===== -->
<!-- SHEETTEXT START -->
<div class="a ti" id="t0" style="left:309.5px;top:310.0px;letter-spacing:-2.094px">標的型攻撃メール対応訓練実施キット　訓練メールパターン設定シート</div>
<div class="a hd" id="t1" style="left:35.0px;top:374.5px"><span class="rj" style="letter-spacing:-0.990px">パターン</span><span class="rl" style="letter-spacing:0.680px">ID</span></div>
<div class="a hd" id="t2" style="left:291.0px;top:374.5px;letter-spacing:-0.200px">説明</div>
<div class="a hm" id="t3" style="left:563.4px;top:373.5px;letter-spacing:0.823px">M001</div>
<div class="a hm" id="t4" style="left:1171.0px;top:373.5px;letter-spacing:1.356px">M002</div>
<div class="a ca" id="t5" style="left:36.0px;top:435.5px;letter-spacing:-0.778px">訓練メールの送信形式</div>
<div class="a ca" id="t6" style="left:36.0px;top:503.4px;transform:scaleX(0.8471);transform-origin:0 50%">訓練メールのタイトル</div>
<div class="a ca" id="t7" style="left:45.5px;top:528.0px;letter-spacing:1.534px">(Subject)</div>
<div class="a ca" id="t8" style="left:36.0px;top:579.7px;letter-spacing:-1.717px">訓練メールの差出人アドレス</div>
<div class="a ca" id="t9" style="left:45.5px;top:605.6px"><span class="rl" style="letter-spacing:0.680px">(From</span><span class="rj" style="letter-spacing:-2.145px">アドレス</span><span class="rl" style="letter-spacing:0.680px">)</span></div>
<div class="a ca" id="t10" style="left:36.0px;top:674.0px"><span class="rj" style="letter-spacing:-2.168px">訓練メールの</span><span class="rl" style="letter-spacing:0.680px">ReplyTo</span><span class="rj" style="letter-spacing:-2.168px">アドレス</span></div>
<div class="a ca" id="t11" style="left:35.0px;top:758.6px;letter-spacing:-0.875px">メールの重要度設定</div>
<div class="a ca" id="t12" style="left:35.0px;top:844.0px;letter-spacing:-1.800px">メールの文字コード設定</div>
<div class="a ca" id="t13" style="left:36.0px;top:944.7px;letter-spacing:-1.938px">添付ファイルの名称</div>
<div class="a ca" id="t14" style="left:36.0px;top:1014.0px;letter-spacing:-1.286px">訓練メールの本文</div>
<div class="a ca" id="t15" style="left:45.5px;top:1040.0px;letter-spacing:1.506px">(MailBody)</div>
<div class="a cb" id="t16" style="left:290.6px;top:417.0px;letter-spacing:-1.832px">訓練メールの送信形式として、「テキスト形</div>
<div class="a cb" id="t17" style="left:290.6px;top:437.5px"><span class="rj" style="letter-spacing:-1.731px">式」か「</span><span class="rl" style="letter-spacing:0.560px">HTML</span><span class="rj" style="letter-spacing:-1.731px">形式」のいずれかを設定して下</span></div>
<div class="a cb" id="t18" style="left:290.6px;top:459.0px;transform:scaleX(0.6619);transform-origin:0 50%">さい。</div>
<div class="a cb" id="t19" style="left:290.6px;top:518.7px;letter-spacing:-2.111px">訓練メールのタイトルを設定して下さい。</div>
<div class="a cb" id="t20" style="left:290.6px;top:584.7px;letter-spacing:-1.332px">訓練メールの差出人名として設定するメール</div>
<div class="a cb" id="t21" style="left:290.6px;top:605.7px;transform:scaleX(0.8335);transform-origin:0 50%">アドレスを設定して下さい。</div>
<div class="a cb" id="t22" style="left:290.6px;top:655.0px;letter-spacing:-2.120px">訓練メールの戻り先となるメールアドレスを設</div>
<div class="a cb" id="t23" style="left:290.6px;top:677.0px"><span class="rj" style="letter-spacing:-1.030px">定して下さい。（空欄の場合は</span><span class="rl" style="letter-spacing:0.560px">From</span><span class="rj" style="letter-spacing:-1.030px">アドレ</span></div>
<div class="a cb" id="t24" style="left:290.6px;top:697.0px;letter-spacing:-2.500px">スが設定されます）</div>
<div class="a cb" id="t25" style="left:290.6px;top:750.0px;letter-spacing:-1.580px">送信されるメールの重要度を指定して下さい。</div>
<div class="a cb" id="t26" style="left:293.6px;top:771.0px;letter-spacing:-1.860px">（高、普通のいずれか）</div>
<div class="a cb" id="t27" style="left:290.6px;top:836.0px;letter-spacing:-1.580px">以下いずれかの文字コードを設定して下さい。</div>
<div class="a cb" id="t28" style="left:290.6px;top:856.0px"><span class="rl" style="letter-spacing:0.560px">S-JIS</span><span class="rj" style="letter-spacing:-2.554px">、</span><span class="rl" style="letter-spacing:0.560px">JIS</span><span class="rj" style="letter-spacing:-2.554px">、</span><span class="rl" style="letter-spacing:0.560px">EUC</span><span class="rj" style="letter-spacing:-2.554px">、</span><span class="rl" style="letter-spacing:0.560px">UTF-8</span></div>
<div class="a cb" id="t29" style="left:290.6px;top:915.0px;letter-spacing:-1.730px">メールにファイルを添付する場合は、添付する</div>
<div class="a cb" id="t30" style="left:290.6px;top:936.0px;letter-spacing:-2.155px">ファイルのファイル名を指定して下さい。（空</div>
<div class="a cb" id="t31" style="left:290.6px;top:957.0px;letter-spacing:-1.930px">欄の場合はマスタシートで指定したファイルが</div>
<div class="a cb" id="t32" style="left:290.6px;top:976.8px;transform:scaleX(0.8238);transform-origin:0 50%">そのまま添付されます。）</div>
<div class="a cb" id="t33" style="left:290.6px;top:1015.0px;letter-spacing:-1.475px">訓練メールの本文を記載して下さい。</div>
<div class="a cb" id="t34" style="left:290.6px;top:1057.0px"><span class="rl" style="letter-spacing:0.560px">HTML</span><span class="rj" style="letter-spacing:-1.057px">形式のメールを送る場合はメール本文</span></div>
<div class="a cb" id="t35" style="left:290.6px;top:1077.0px"><span class="rj" style="letter-spacing:-1.497px">を</span><span class="rl" style="letter-spacing:0.560px">HTML</span><span class="rj" style="letter-spacing:-1.497px">形式で記述して下さい。</span></div>
<div class="a cj" id="t36" style="left:563.0px;top:435.0px;letter-spacing:-2.060px">テキスト形式</div>
<div class="a cc" id="t37" style="left:563.0px;top:516.0px;letter-spacing:1.218px">Invoice-#8603279</div>
<div class="a cj" id="t38" style="left:563.0px;top:759.0px;letter-spacing:1.000px">高</div>
<div class="a cc" id="t39" style="left:563.0px;top:1013.7px;letter-spacing:0.321px">Please find attached your latest purchase invoice.</div>
<div class="a as" id="t40" style="left:563.0px;top:1036.5px;letter-spacing:2.698px">*************************************************</div>
<div class="a cc" id="t41" style="left:563.0px;top:1062.0px;letter-spacing:0.460px">Any queries with either the quantity or price MUST be notified</div>
<div class="a cc" id="t42" style="left:563.0px;top:1086.0px;letter-spacing:0.509px">immediately to the department below.</div>
<div class="a as" id="t43" style="left:563.0px;top:1109.0px;letter-spacing:2.698px">*************************************************</div>
<!-- SHEETTEXT END -->
<div class="a" style="left:0;top:1114px;width:1521px;height:1px;background:#f7f7f7"></div>
</body></html>
